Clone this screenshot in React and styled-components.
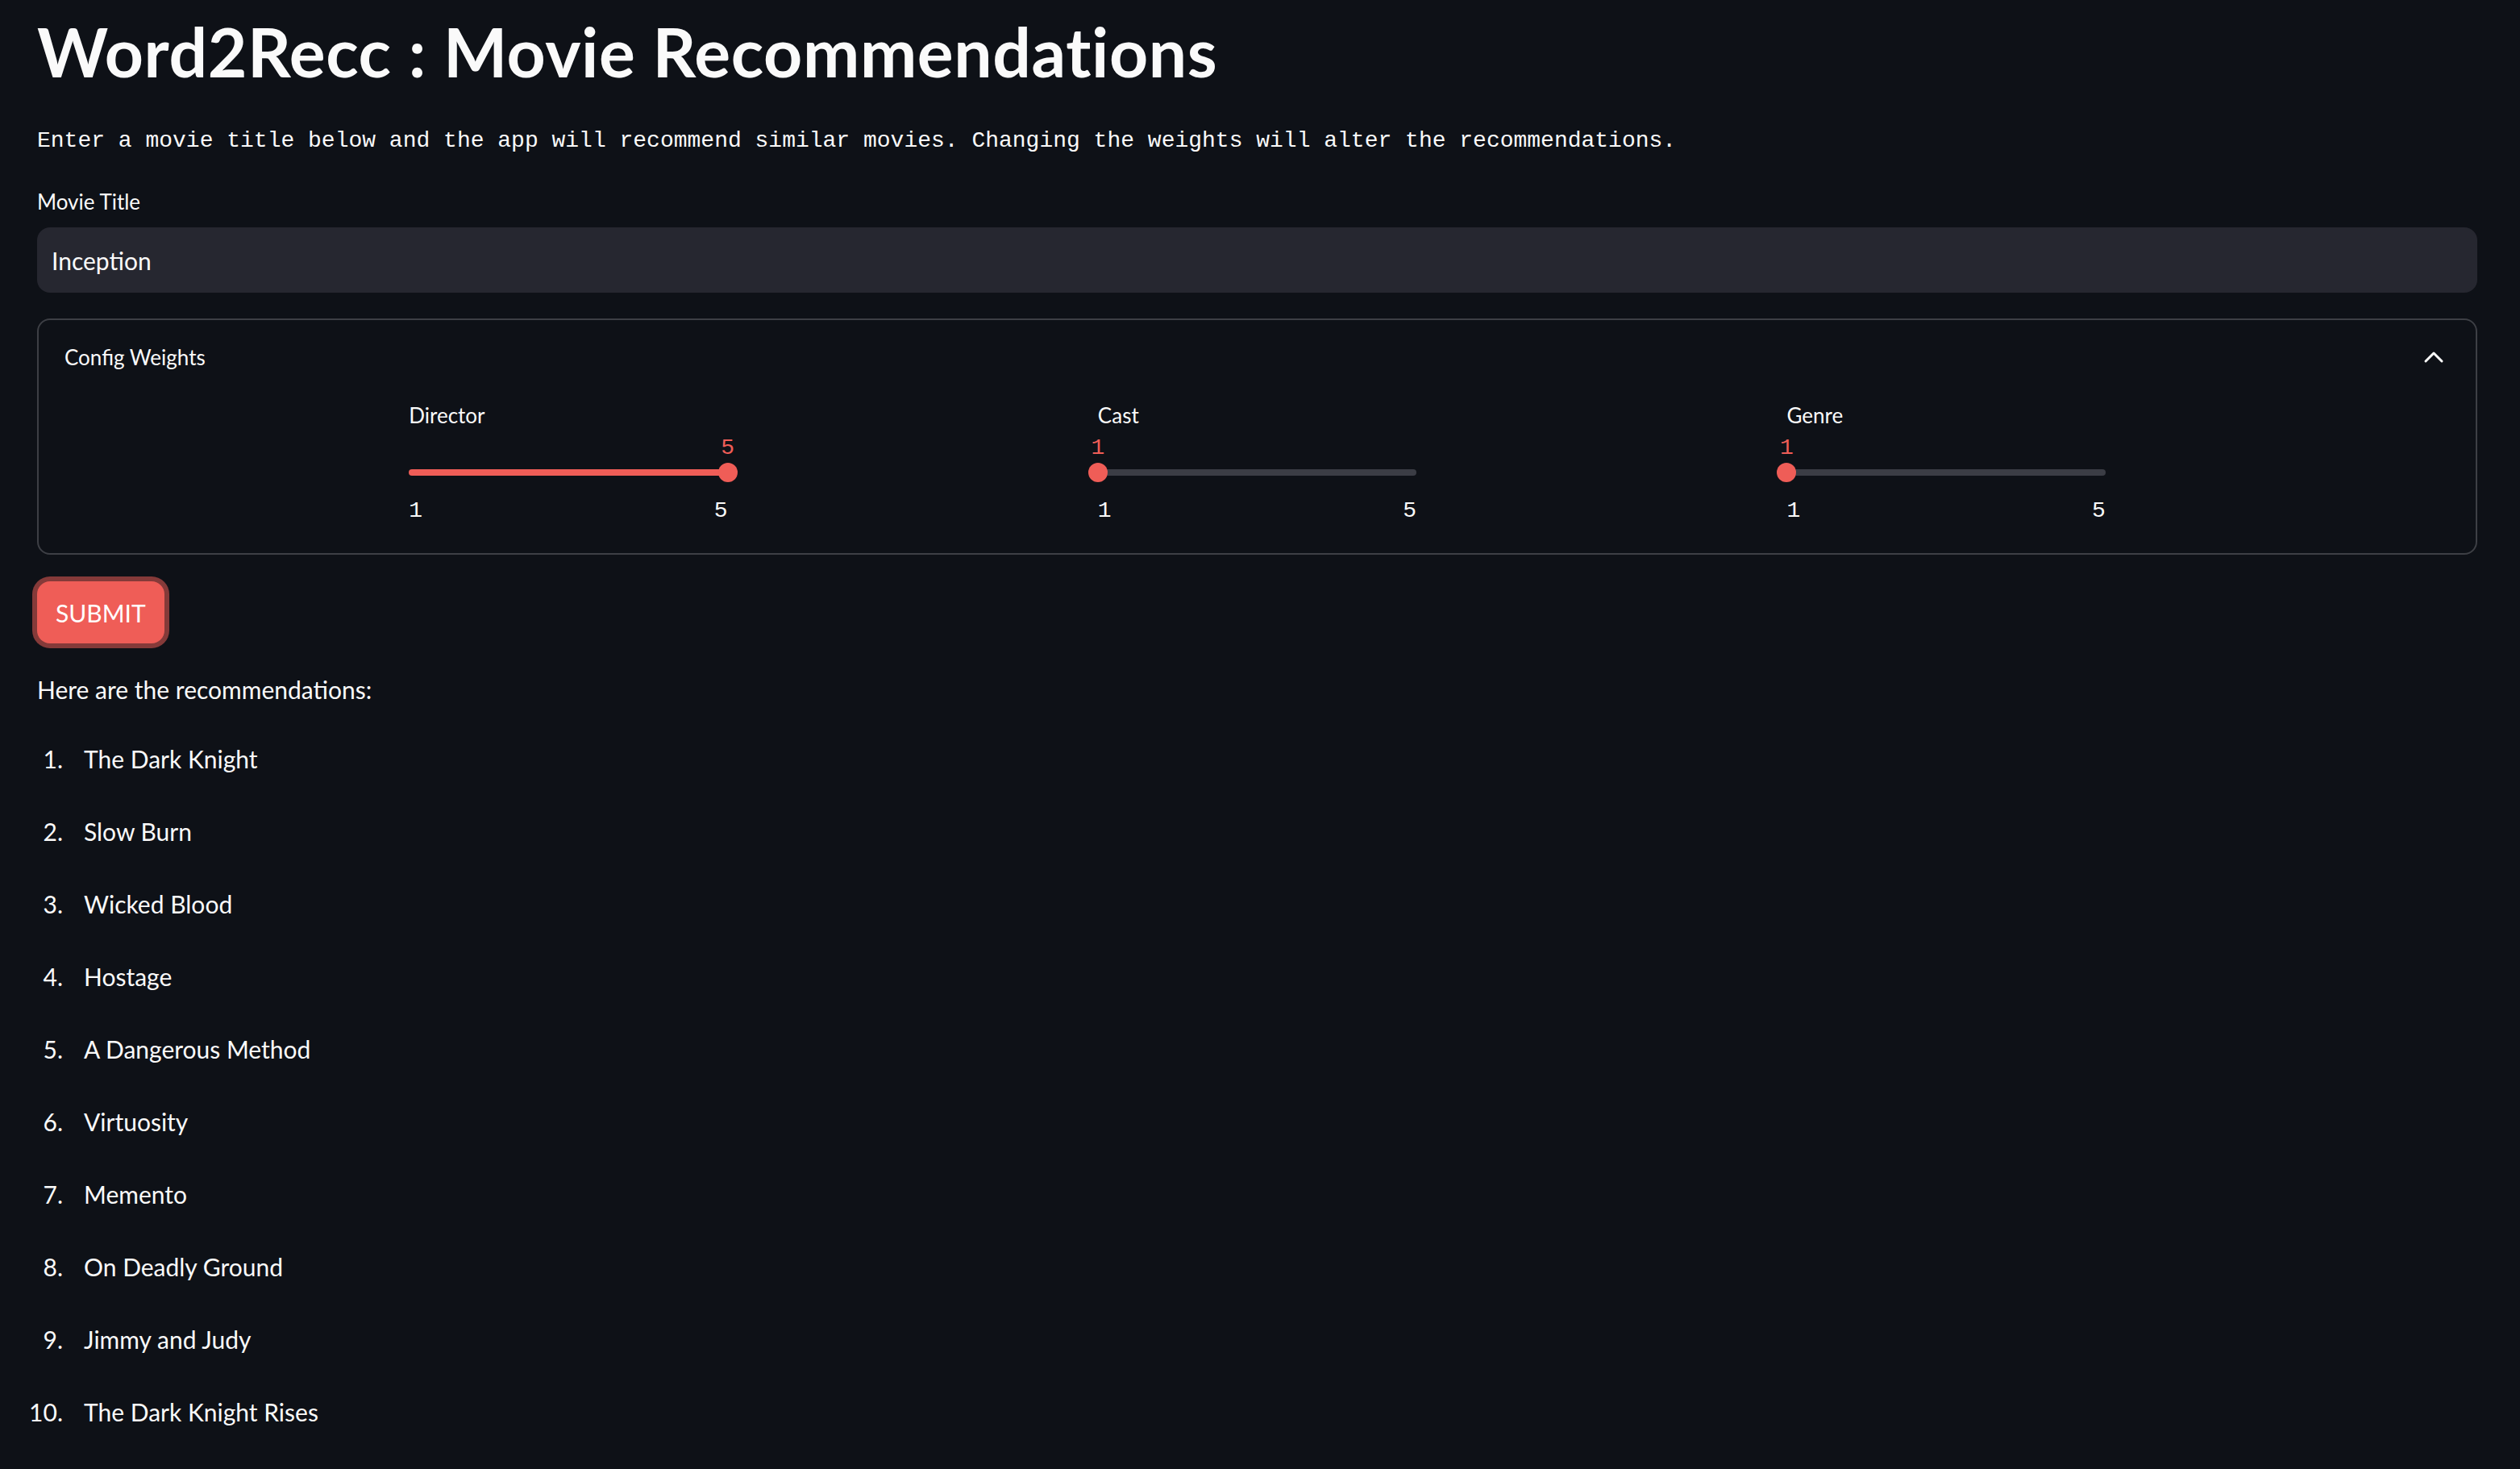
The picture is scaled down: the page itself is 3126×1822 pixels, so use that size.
import React from "react";
import styled, { createGlobalStyle } from "styled-components";

const RED = "#ef5d57";

const recommendations = [
  "The Dark Knight",
  "Slow Burn",
  "Wicked Blood",
  "Hostage",
  "A Dangerous Method",
  "Virtuosity",
  "Memento",
  "On Deadly Ground",
  "Jimmy and Judy",
  "The Dark Knight Rises",
];

const weights = [
  { label: "Director", value: 5, column: 2 },
  { label: "Cast", value: 1, column: 4 },
  { label: "Genre", value: 1, column: 6 },
];

const MIN = 1;
const MAX = 5;

const GlobalStyle = createGlobalStyle`
  html, body {
    margin: 0;
    padding: 0;
    background: #0e1117;
  }
  body {
    color: #fafafa;
    font-family: Lato, "Noto Sans", sans-serif;
  }
`;

const Page = styled.main`
  min-height: 1822px;
  box-sizing: border-box;
  padding: 14px 53px 0 46px;
  background: #0e1117;
`;

const Title = styled.h1`
  margin: 0;
  font-size: 84px;
  line-height: 100px;
  font-weight: 700;
  letter-spacing: 0.6px;
`;

const Intro = styled.p`
  margin: 41px 0 0;
  font-family: "Liberation Mono", "DejaVu Sans Mono", monospace;
  font-size: 28px;
  line-height: 40px;
  white-space: nowrap;
`;

const FieldLabel = styled.label`
  display: block;
  margin-top: 37px;
  font-size: 26px;
  line-height: 36px;
`;

const TextInput = styled.input`
  display: block;
  box-sizing: border-box;
  width: 100%;
  height: 81px;
  margin-top: 14px;
  padding: 0 18px;
  border: none;
  border-radius: 16px;
  background: #262730;
  color: #fafafa;
  font-family: Lato, "Noto Sans", sans-serif;
  font-size: 30px;
  outline: none;
`;

const Expander = styled.section`
  box-sizing: border-box;
  height: 293px;
  margin-top: 32px;
  border: 2px solid #3d3f45;
  border-radius: 16px;
`;

const ExpanderHeader = styled.div`
  display: flex;
  align-items: center;
  justify-content: space-between;
  padding: 26px 32px 0 32px;
  font-size: 26px;
  line-height: 36px;
`;

const SliderGrid = styled.div`
  display: grid;
  grid-template-columns: repeat(7, 1fr);
  column-gap: 32px;
  padding: 34px 32px 0;
`;

const SliderBlock = styled.div`
  grid-column: ${(p) => p.$column};
`;

const SliderLabel = styled.div`
  font-size: 26px;
  line-height: 36px;
`;

const Mono = styled.div`
  font-family: "Liberation Mono", "DejaVu Sans Mono", monospace;
  font-size: 28px;
  line-height: 36px;
`;

const ValueRow = styled(Mono)`
  position: relative;
  height: 36px;
  margin-top: 5px;
  color: ${RED};
`;

const ValueText = styled.span`
  position: absolute;
  top: 0;
  transform: translateX(-50%);
`;

const TrackArea = styled.div`
  position: relative;
  height: 24px;
  display: flex;
  align-items: center;
`;

const Track = styled.div`
  position: relative;
  width: 100%;
  height: 8px;
  border-radius: 4px;
  background: #3b3d45;
  overflow: hidden;
`;

const Fill = styled.div`
  height: 100%;
  background: ${RED};
`;

const Thumb = styled.div`
  position: absolute;
  top: 0;
  width: 24px;
  height: 24px;
  border-radius: 50%;
  background: ${RED};
  transform: translateX(-50%);
`;

const Bounds = styled(Mono)`
  display: flex;
  justify-content: space-between;
  margin-top: 18px;
`;

const SubmitButton = styled.button`
  display: block;
  box-sizing: border-box;
  height: 77px;
  margin: 33px 0 0;
  padding: 0 23px;
  border: none;
  border-radius: 16px;
  background: ${RED};
  color: #fff;
  font-family: Lato, "Noto Sans", sans-serif;
  font-size: 30px;
  box-shadow: 0 0 0 6px #853a39;
`;

const Lead = styled.p`
  margin: 33px 0 0;
  font-size: 30px;
  line-height: 48px;
`;

const List = styled.ol`
  margin: 17px 0 0;
  padding: 0;
  list-style: none;
`;

const Item = styled.li`
  display: flex;
  font-size: 30px;
  line-height: 90px;
`;

const Num = styled.span`
  width: 44px;
  margin-left: -12px;
  margin-right: 26px;
  text-align: right;
`;

const WeightSlider = ({ label, value, column }) => {
  const pct = ((value - MIN) / (MAX - MIN)) * 100;
  return (
    <SliderBlock $column={column}>
      <SliderLabel>{label}</SliderLabel>
      <ValueRow>
        <ValueText style={{ left: `${pct}%` }}>{value}</ValueText>
      </ValueRow>
      <TrackArea>
        <Track>
          <Fill style={{ width: `${pct}%` }} />
        </Track>
        <Thumb style={{ left: `${pct}%` }} />
      </TrackArea>
      <Bounds>
        <span>{MIN}</span>
        <span>{MAX}</span>
      </Bounds>
    </SliderBlock>
  );
};

const ChevronUp = () => (
  <svg width="40" height="40" viewBox="0 0 24 24" fill="none">
    <path
      d="m18 15-6-6-6 6"
      stroke="#fafafa"
      strokeWidth="1.8"
      strokeLinecap="round"
      strokeLinejoin="round"
    />
  </svg>
);

const App = () => {
  return (
    <Page>
      <GlobalStyle />
      <Title>Word2Recc : Movie Recommendations</Title>
      <Intro>
        Enter a movie title below and the app will recommend similar movies.
        Changing the weights will alter the recommendations.
      </Intro>
      <FieldLabel htmlFor="title">Movie Title</FieldLabel>
      <TextInput id="title" defaultValue="Inception" />
      <Expander>
        <ExpanderHeader>
          <span>Config Weights</span>
          <ChevronUp />
        </ExpanderHeader>
        <SliderGrid>
          {weights.map((w) => (
            <WeightSlider key={w.label} {...w} />
          ))}
        </SliderGrid>
      </Expander>
      <SubmitButton>SUBMIT</SubmitButton>
      <Lead>Here are the recommendations:</Lead>
      <List>
        {recommendations.map((title, i) => (
          <Item key={title}>
            <Num>{i + 1}.</Num>
            <span>{title}</span>
          </Item>
        ))}
      </List>
    </Page>
  );
};

export default App;
